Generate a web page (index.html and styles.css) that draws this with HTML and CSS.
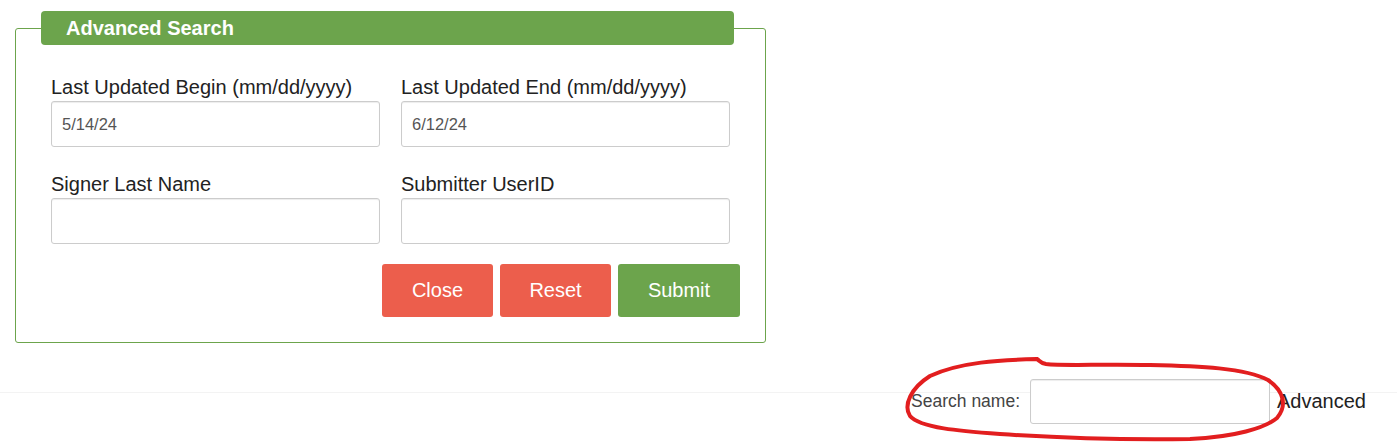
FILE: index.html
```html
<!DOCTYPE html>
<html lang="en">
<head>
    <meta charset="UTF-8">
    <meta name="viewport" content="width=device-width, initial-scale=1.0">
    <title>Advanced Search</title>
    <link rel="stylesheet" href="styles.css">
</head>
<body>
    <fieldset class="advanced">
        <legend>Advanced Search</legend>
        <div class="fields">
            <div class="field">
                <label for="begin">Last Updated Begin (mm/dd/yyyy)</label>
                <input type="text" id="begin" value="5/14/24">
            </div>
            <div class="field">
                <label for="end">Last Updated End (mm/dd/yyyy)</label>
                <input type="text" id="end" value="6/12/24">
            </div>
            <div class="field">
                <label for="signer">Signer Last Name</label>
                <input type="text" id="signer">
            </div>
            <div class="field">
                <label for="submitter">Submitter UserID</label>
                <input type="text" id="submitter">
            </div>
        </div>
        <div class="actions">
            <button class="btn btn-red">Close</button>
            <button class="btn btn-red">Reset</button>
            <button class="btn btn-green btn-wide">Submit</button>
        </div>
    </fieldset>

    <div class="search-bar">
        <label for="searchName">Search name:</label>
        <input type="text" id="searchName">
        <a class="advanced-link">Advanced</a>
    </div>

    <!-- hand-drawn highlight round the search box -->
    <svg class="scribble" width="1397" height="446" viewBox="0 0 1397 446">
        <path d="M1037 359 C1000 360 960 362 930 376 C911 388 903 405 910 416 C920 428 960 431 1000 434 C1060 438 1130 440 1190 439 C1235 437 1265 428 1277 418 C1288 405 1283 390 1268 380 C1245 368 1200 366 1150 365 C1100 364 1062 366 1046 364 C1040 363 1040 361 1037 359" fill="none" stroke="#e21e1f" stroke-width="4" stroke-linecap="round" stroke-linejoin="round"/>
    </svg>
</body>
</html>
```

FILE: styles.css
```css
/* General Styles */
html {
    min-height: 446px;
}

body {
    font-family: 'Liberation Sans', Arial, sans-serif;
    background: #fff;
    color: #222;
    margin: 0;
    padding: 0;
    min-height: 446px;
    position: relative;
}

/* Advanced search panel */
.advanced {
    width: 751px;
    box-sizing: border-box;
    margin: 11px 0 0 15px;
    padding: 0 25px 25px 0;
    border: 1px solid #6ca44c;
    border-radius: 3px;
    min-inline-size: 0;
}

.advanced legend {
    width: 693px;
    height: 34px;
    box-sizing: border-box;
    margin-left: 25px;
    padding: 0 25px;
    background-color: #6ca44c;
    border-radius: 4px;
    color: #fff;
    font-size: 20px;
    font-weight: bold;
    line-height: 34px;
}

.fields {
    display: grid;
    grid-template-columns: 329px 329px;
    column-gap: 21px;
    row-gap: 27px;
    padding: 32px 0 0 35px;
}

.field label {
    display: block;
    font-size: 20px;
    line-height: 20px;
    color: #222;
    margin-bottom: 4px;
}

input {
    width: 100%;
    height: 46px;
    padding: 0 10px;
    border: 1px solid #ccc;
    border-radius: 3px;
    font-family: 'Liberation Sans', Arial, sans-serif;
    font-size: 16.5px;
    color: #555;
    box-sizing: border-box;
    box-shadow: inset 0 1px 1px rgba(0, 0, 0, 0.075);
    outline: none;
}

.actions {
    display: flex;
    justify-content: flex-end;
    gap: 7px;
    margin-top: 20px;
}

.btn {
    width: 111px;
    height: 53px;
    padding: 0;
    border: none;
    border-radius: 3px;
    color: #fff;
    font-family: 'Liberation Sans', Arial, sans-serif;
    font-size: 20px;
    cursor: pointer;
}

.btn-wide {
    width: 122px;
}

.btn-red {
    background-color: #ec5e4c;
}

.btn-green {
    background-color: #6ca44c;
}

/* Search bar below the panel */
.search-bar {
    display: flex;
    justify-content: flex-end;
    align-items: center;
    margin-top: 36px;
    padding-right: 31px;
    background: linear-gradient(to bottom, transparent 13px, #f3f3f3 13px, #f3f3f3 14px, transparent 14px);
}

.search-bar label {
    font-size: 17.5px;
    color: #444;
    margin-right: 10px;
}

.search-bar input {
    width: 240px;
    height: 45px;
}

.advanced-link {
    font-size: 20px;
    color: #222;
    margin-left: 7px;
}

.scribble {
    position: absolute;
    left: 0;
    top: 0;
    pointer-events: none;
}
```
